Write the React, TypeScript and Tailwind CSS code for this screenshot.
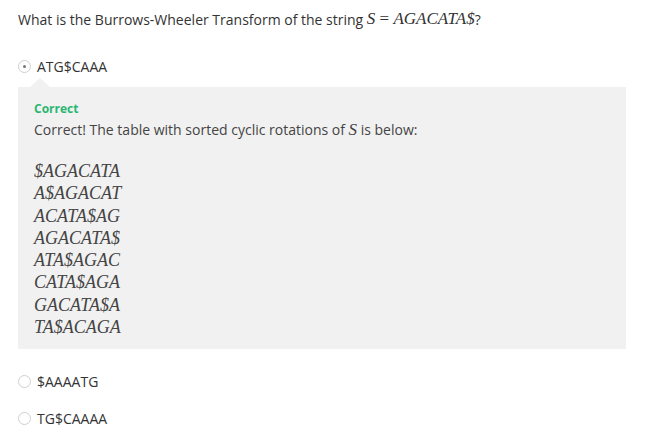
import React from 'react';

const rotations = [
  '$AGACATA',
  'A$AGACAT',
  'ACATA$AG',
  'AGACATA$',
  'ATA$AGAC',
  'CATA$AGA',
  'GACATA$A',
  'TA$ACAGA',
];

function Radio({ checked }: { checked?: boolean }) {
  return (
    <span className="w-[13px] h-[13px] rounded-full border border-[#d0d0d0] bg-white flex items-center justify-center shrink-0">
      {checked && <span className="w-[3px] h-[3px] rounded-full bg-[#777]" />}
    </span>
  );
}

function Option({ label, checked }: { label: string; checked?: boolean }) {
  return (
    <div className="flex items-center gap-[6px] h-[18px] text-[14px] text-[#333]">
      <Radio checked={checked} />
      <span>{label}</span>
    </div>
  );
}

export default function App() {
  return (
    <div className="w-[660px] h-[448px] bg-white pl-[18px] pt-[10px] font-['Open_Sans',sans-serif]">
      <div className="h-[18px] flex items-center text-[14px] text-[#333]">
        What is the Burrows-Wheeler Transform of the string&nbsp;
        <span className="font-['Liberation_Serif',serif] text-[17px]">
          <i>S</i> = <i>AGACATA$</i>
        </span>
        ?
      </div>

      <div className="mt-[29px]">
        <Option label="ATG$CAAA" checked />
      </div>

      <div className="relative mt-[12px] w-[608px] bg-[#f1f1f1] pt-[14px] pb-[11px] pl-[16px]">
        <div className="absolute -top-[9px] left-[12px] w-0 h-0 border-l-[10px] border-r-[10px] border-b-[9px] border-l-transparent border-r-transparent border-b-[#f1f1f1]" />
        <div className="text-[12px] leading-[16px] font-bold text-[#2bb673]">Correct</div>
        <div className="mt-[4px] text-[14px] leading-[18px] text-[#444] flex items-center">
          Correct! The table with sorted cyclic rotations of&nbsp;
          <i className="font-['Liberation_Serif',serif] text-[17px] leading-[18px]">S</i>
          &nbsp;is below:
        </div>
        <div className="mt-[21px] font-['Liberation_Serif',serif] italic text-[18px] leading-[22.3px] text-[#444]">
          {rotations.map((r) => (
            <div key={r}>{r}</div>
          ))}
        </div>
      </div>

      <div className="mt-[23px]">
        <Option label="$AAAATG" />
      </div>
      <div className="mt-[19px]">
        <Option label="TG$CAAAA" />
      </div>
    </div>
  );
}
